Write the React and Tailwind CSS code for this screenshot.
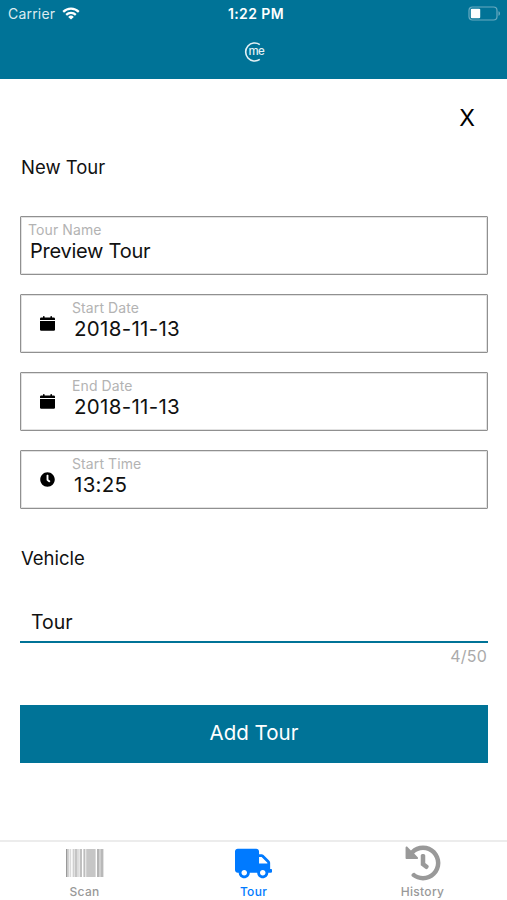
import { useState } from 'react'
import { FaClock, FaHistory, FaTruck } from 'react-icons/fa'

const BARS = [
  [0, 1.6, '#9a9a9a'], [1.6, 1.8, '#d2d2d2'], [4, 1.2, '#dadada'], [6.6, 1.6, '#cfcfcf'], [8.6, 3, '#c4c4c4'],
  [12, 1, '#dedede'], [13.6, 2.4, '#c0c0c0'], [17.4, 2, '#bdbdbd'], [20.2, 9.4, '#c6c6c6'],
  [31, 2, '#b4b4b4'], [33, 1.4, '#cfcfcf'], [34.4, 3, '#b9b9b9'],
]

function WifiIcon() {
  return (
    <svg width="18" height="13" viewBox="0 0 18 13" fill="none" stroke="white" strokeWidth="2.2">
      <path d="M1.2 4.9a11 11 0 0 1 15.6 0" />
      <path d="M4.2 7.9a6.8 6.8 0 0 1 9.6 0" />
      <path d="M9 12.6 6.2 9.9a4 4 0 0 1 5.6 0z" fill="white" stroke="none" />
    </svg>
  )
}

function BatteryIcon() {
  return (
    <svg width="33" height="15" viewBox="0 0 33 15" fill="none">
      <rect x="1" y="1" width="28" height="13" rx="3.5" stroke="#69abc1" strokeWidth="1.2" />
      <rect x="2.8" y="2.8" width="9.4" height="9.4" rx="1" fill="white" />
      <path d="M30.6 5.2c1.5.5 1.5 4.1 0 4.6z" fill="#8fc0d0" />
    </svg>
  )
}

function Logo() {
  return (
    <svg width="22" height="22" viewBox="0 0 22 22" className="overflow-visible">
      <path d="M16.8 3.6A9 9 0 1 0 16.8 18.4" fill="none" stroke="#e4f1f5" strokeWidth="1.6" />
      <text x="5.6" y="14" fontSize="11.5" fontWeight="500" fill="#e4f1f5" letterSpacing="-0.8">me</text>
    </svg>
  )
}

function CalendarIcon() {
  return (
    <svg width="15" height="15" viewBox="0 0 15 15" fill="black">
      <path d="M0 4V2.8Q0 1.5 1.3 1.5H3V.7Q3 0 3.8 0t.8.7v.8h5.8V.7q0-.7.8-.7t.8.7v.8h1.5Q15 1.5 15 2.8V4z" />
      <path d="M0 5h15v8.6q0 1.2-1.2 1.2H1.2Q0 14.8 0 13.6z" />
    </svg>
  )
}

function BarcodeIcon() {
  return (
    <svg width="38" height="28" viewBox="0 0 38 28">
      {BARS.map(([x, w, fill]) => <rect key={x} x={x} width={w} height="28" fill={fill} />)}
    </svg>
  )
}

function Field({ label, value, icon }) {
  return (
    <div className="flex h-[58.5px] rounded-[1px] border border-[#909090] outline outline-[0.5px] -outline-offset-2 outline-[#e2e2e2]">
      {icon && <div className="flex w-[44px] items-center pl-[19px]">{icon}</div>}
      <div className="pt-[4px] pl-[7px]">
        <p className="text-[14px] leading-[18px] tracking-[0.1px] text-[#b3b3b3]">{label}</p>
        <p className={`pl-[2px] leading-[24px] text-[#111] ${icon ? 'text-[20.5px] tracking-[0.3px]' : 'text-[20px] tracking-[-0.25px]'}`}>{value}</p>
      </div>
    </div>
  )
}

const TABS = [
  { id: 'Scan', icon: <BarcodeIcon /> },
  { id: 'Tour', icon: <FaTruck size={37} /> },
  { id: 'History', icon: <FaHistory size={36} /> },
]

export default function App() {
  const [tab, setTab] = useState('Tour')

  return (
    <div className="flex h-[900px] w-[507px] flex-col overflow-hidden bg-white font-['Inter',sans-serif]">
      <header className="h-[79px] bg-[#007397] text-white">
        {/* Status bar */}
        <div className="grid h-[27px] grid-cols-3 items-center pr-[6px] pl-[8px]">
          <div className="flex items-center gap-[7px]">
            <span className="text-[14px] tracking-[0.2px] text-[#dcebf0]">Carrier</span>
            <WifiIcon />
          </div>
          <span className="pl-[3px] text-center text-[14px] font-semibold tracking-[0.4px]">1:22 PM</span>
          <div className="flex justify-end"><BatteryIcon /></div>
        </div>
        <div className="flex justify-center pt-[14px]"><Logo /></div>
      </header>

      <main className="flex-1 pr-[19px] pl-[20px]">
        <div className="flex h-[77px] items-center justify-end pt-[2px] pr-[13px]">
          <button className="text-[23px] leading-none text-black">X</button>
        </div>
        <h1 className="h-[60px] pl-px text-[18.5px] leading-[22px] text-[#111]">New Tour</h1>

        <div className="flex flex-col gap-[19.6px]">
          <Field label="Tour Name" value="Preview Tour" />
          <Field label="Start Date" value="2018-11-13" icon={<CalendarIcon />} />
          <Field label="End Date" value="2018-11-13" icon={<CalendarIcon />} />
          <Field label="Start Time" value="13:25" icon={<FaClock size={15} />} />
        </div>

        <h2 className="mt-[38px] pl-px text-[18.5px] leading-[22px] text-[#111]">Vehicle</h2>
        <div className="mt-[38px] h-[36px] border-b-[2.5px] border-[#007397] pl-[11px] text-[19.5px] leading-[30px] text-[#111]">Tour</div>
        <p className="pt-[2px] pr-px text-right text-[16px] leading-[22px] tracking-[0.2px] text-[#aaa]">4/50</p>
        <button className="mt-[38px] h-[58px] w-full bg-[#007397] text-[20.5px] text-white">Add Tour</button>
      </main>

      <nav className="grid h-[60px] grid-cols-3 border-t-2 border-[#ececec]">
        {TABS.map(t => (
          <button key={t.id} onClick={() => setTab(t.id)}
            className={`flex flex-col items-center ${tab === t.id ? 'text-[#007aff]' : 'text-[#999]'}`}>
            <span className="flex h-[42px] items-center">{t.icon}</span>
            <span className="text-[12px] leading-[15px] font-medium tracking-[0.3px]">{t.id}</span>
          </button>
        ))}
      </nav>
    </div>
  )
}
